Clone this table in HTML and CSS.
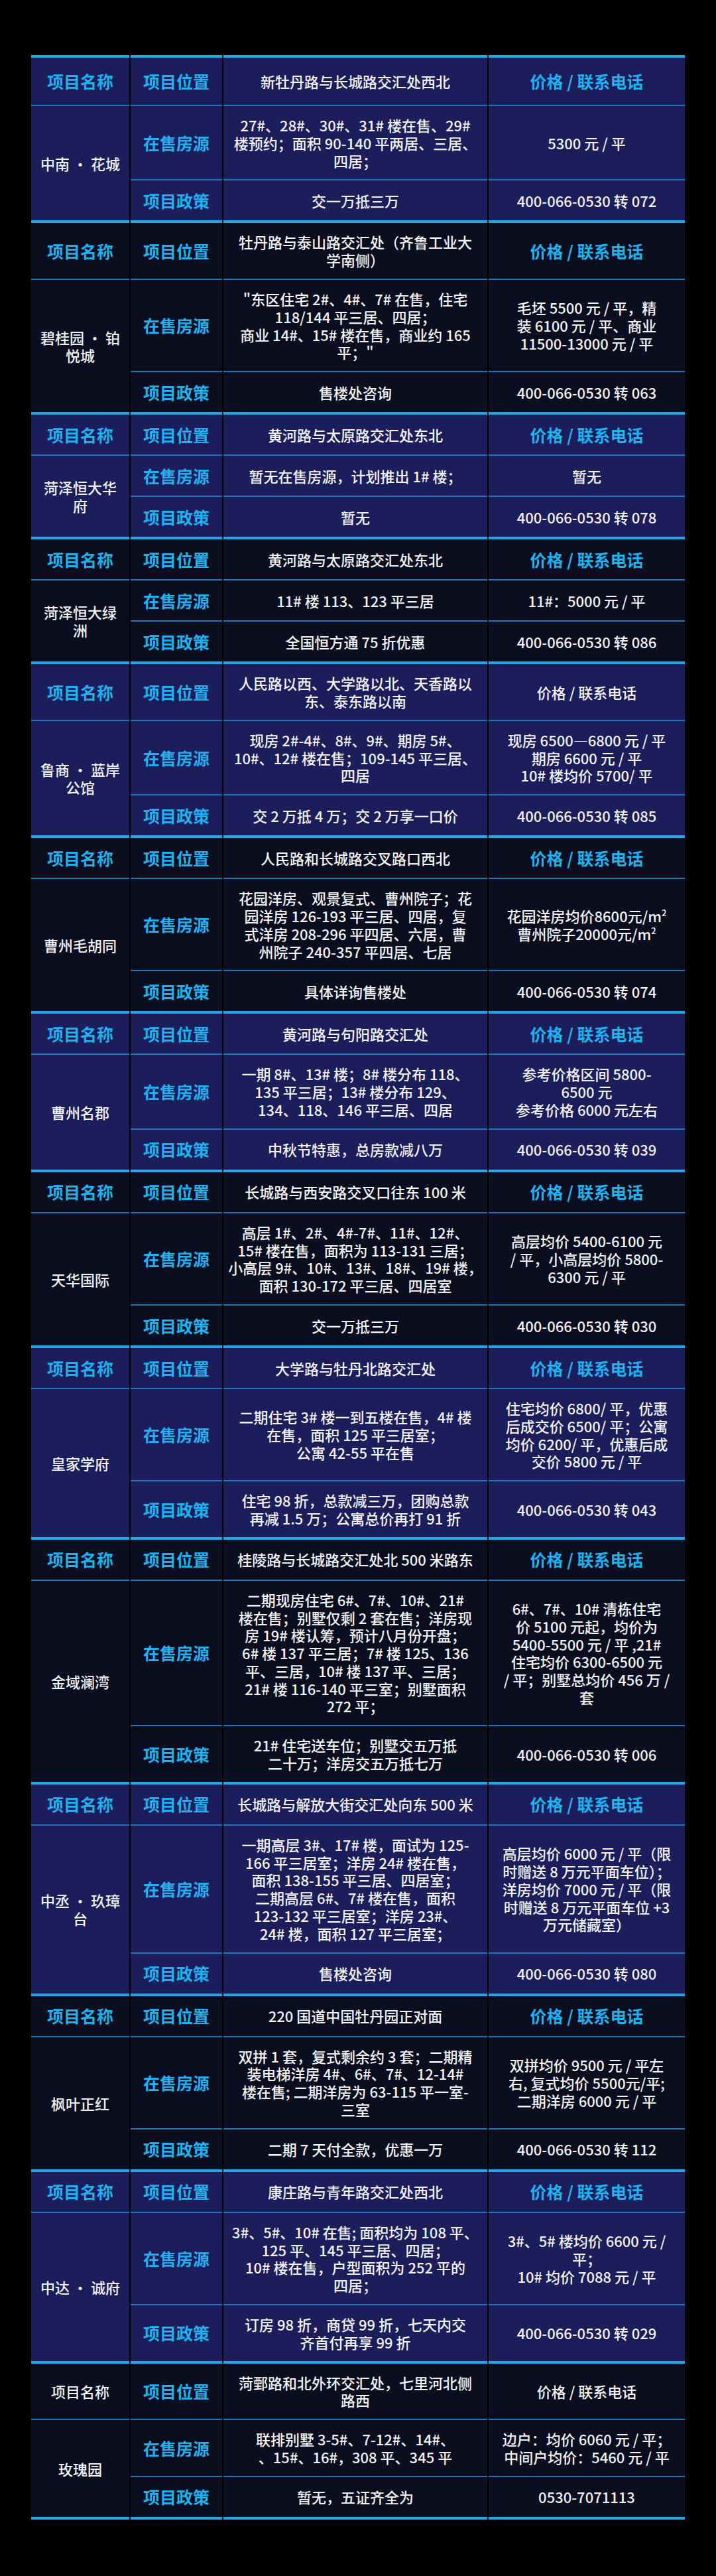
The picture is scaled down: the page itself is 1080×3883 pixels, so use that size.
FILE: index.html
```html
<!DOCTYPE html>
<html lang="zh-CN">
<head>
<meta charset="utf-8">
<title>楼盘信息</title>
<link rel="stylesheet" href="styles.css">
</head>
<body>
<main class="table">

<section class="block navy tall-head">
  <div class="cell head hl">项目名称</div>
  <div class="cell head hl">项目位置</div>
  <div class="cell head">新牡丹路与长城路交汇处西北</div>
  <div class="cell head hl">价格 / 联系电话</div>
  <div class="cell name">中南 · 花城</div>
  <div class="cell hl">在售房源</div>
  <div class="cell">27#、28#、30#、31# 楼在售、29#<br>楼预约；面积 90-140 平两居、三居、<br>四居；</div>
  <div class="cell">5300 元 / 平</div>
  <div class="cell hl">项目政策</div>
  <div class="cell">交一万抵三万</div>
  <div class="cell">400-066-0530 转 072</div>
</section>

<section class="block dark">
  <div class="cell head hl">项目名称</div>
  <div class="cell head hl">项目位置</div>
  <div class="cell head">牡丹路与泰山路交汇处（齐鲁工业大<br>学南侧）</div>
  <div class="cell head hl">价格 / 联系电话</div>
  <div class="cell name">碧桂园 · 铂<br>悦城</div>
  <div class="cell hl">在售房源</div>
  <div class="cell">"东区住宅 2#、4#、7# 在售，住宅<br>118/144 平三居、四居；<br>商业 14#、15# 楼在售，商业约 165<br>平；"</div>
  <div class="cell">毛坯 5500 元 / 平，精<br>装 6100 元 / 平、商业<br>11500-13000 元 / 平</div>
  <div class="cell hl">项目政策</div>
  <div class="cell">售楼处咨询</div>
  <div class="cell">400-066-0530 转 063</div>
</section>

<section class="block navy">
  <div class="cell head hl">项目名称</div>
  <div class="cell head hl">项目位置</div>
  <div class="cell head">黄河路与太原路交汇处东北</div>
  <div class="cell head hl">价格 / 联系电话</div>
  <div class="cell name">菏泽恒大华<br>府</div>
  <div class="cell hl">在售房源</div>
  <div class="cell">暂无在售房源，计划推出 1# 楼；</div>
  <div class="cell">暂无</div>
  <div class="cell hl">项目政策</div>
  <div class="cell">暂无</div>
  <div class="cell">400-066-0530 转 078</div>
</section>

<section class="block dark">
  <div class="cell head hl">项目名称</div>
  <div class="cell head hl">项目位置</div>
  <div class="cell head">黄河路与太原路交汇处东北</div>
  <div class="cell head hl">价格 / 联系电话</div>
  <div class="cell name">菏泽恒大绿<br>洲</div>
  <div class="cell hl">在售房源</div>
  <div class="cell">11# 楼 113、123 平三居</div>
  <div class="cell">11#：5000 元 / 平</div>
  <div class="cell hl">项目政策</div>
  <div class="cell">全国恒方通 75 折优惠</div>
  <div class="cell">400-066-0530 转 086</div>
</section>

<section class="block navy">
  <div class="cell head hl">项目名称</div>
  <div class="cell head hl">项目位置</div>
  <div class="cell head">人民路以西、大学路以北、天香路以<br>东、泰东路以南</div>
  <div class="cell head">价格 / 联系电话</div>
  <div class="cell name">鲁商 · 蓝岸<br>公馆</div>
  <div class="cell hl">在售房源</div>
  <div class="cell">现房 2#-4#、8#、9#、期房 5#、<br>10#、12# 楼在售；109-145 平三居、<br>四居</div>
  <div class="cell">现房 6500—6800 元 / 平<br>期房 6600 元 / 平<br>10# 楼均价 5700/ 平</div>
  <div class="cell hl">项目政策</div>
  <div class="cell">交 2 万抵 4 万；交 2 万享一口价</div>
  <div class="cell">400-066-0530 转 085</div>
</section>

<section class="block dark">
  <div class="cell head hl">项目名称</div>
  <div class="cell head hl">项目位置</div>
  <div class="cell head">人民路和长城路交叉路口西北</div>
  <div class="cell head hl">价格 / 联系电话</div>
  <div class="cell name">曹州毛胡同</div>
  <div class="cell hl">在售房源</div>
  <div class="cell">花园洋房、观景复式、曹州院子；花<br>园洋房 126-193 平三居、四居，复<br>式洋房 208-296 平四居、六居，曹<br>州院子 240-357 平四居、七居</div>
  <div class="cell"><span class="t">花园洋房均价8600元/m<sup>2</sup><br>曹州院子20000元/m<sup>2</sup></span></div>
  <div class="cell hl">项目政策</div>
  <div class="cell">具体详询售楼处</div>
  <div class="cell">400-066-0530 转 074</div>
</section>

<section class="block navy">
  <div class="cell head hl">项目名称</div>
  <div class="cell head hl">项目位置</div>
  <div class="cell head">黄河路与句阳路交汇处</div>
  <div class="cell head hl">价格 / 联系电话</div>
  <div class="cell name">曹州名郡</div>
  <div class="cell hl">在售房源</div>
  <div class="cell">一期 8#、13# 楼；8# 楼分布 118、<br>135 平三居；13# 楼分布 129、<br>134、118、146 平三居、四居</div>
  <div class="cell">参考价格区间 5800-<br>6500 元<br>参考价格 6000 元左右</div>
  <div class="cell hl">项目政策</div>
  <div class="cell">中秋节特惠，总房款减八万</div>
  <div class="cell">400-066-0530 转 039</div>
</section>

<section class="block dark">
  <div class="cell head hl">项目名称</div>
  <div class="cell head hl">项目位置</div>
  <div class="cell head">长城路与西安路交叉口往东 100 米</div>
  <div class="cell head hl">价格 / 联系电话</div>
  <div class="cell name">天华国际</div>
  <div class="cell hl">在售房源</div>
  <div class="cell">高层 1#、2#、4#-7#、11#、12#、<br>15# 楼在售，面积为 113-131 三居；<br>小高层 9#、10#、13#、18#、19# 楼，<br>面积 130-172 平三居、四居室</div>
  <div class="cell">高层均价 5400-6100 元<br>/ 平，小高层均价 5800-<br>6300 元 / 平</div>
  <div class="cell hl">项目政策</div>
  <div class="cell">交一万抵三万</div>
  <div class="cell">400-066-0530 转 030</div>
</section>

<section class="block navy">
  <div class="cell head hl">项目名称</div>
  <div class="cell head hl">项目位置</div>
  <div class="cell head">大学路与牡丹北路交汇处</div>
  <div class="cell head hl">价格 / 联系电话</div>
  <div class="cell name">皇家学府</div>
  <div class="cell hl">在售房源</div>
  <div class="cell">二期住宅 3# 楼一到五楼在售，4# 楼<br>在售，面积 125 平三居室；<br>公寓 42-55 平在售</div>
  <div class="cell">住宅均价 6800/ 平，优惠<br>后成交价 6500/ 平；公寓<br>均价 6200/ 平，优惠后成<br>交价 5800 元 / 平</div>
  <div class="cell hl">项目政策</div>
  <div class="cell">住宅 98 折，总款减三万，团购总款<br>再减 1.5 万；公寓总价再打 91 折</div>
  <div class="cell">400-066-0530 转 043</div>
</section>

<section class="block dark">
  <div class="cell head hl">项目名称</div>
  <div class="cell head hl">项目位置</div>
  <div class="cell head">桂陵路与长城路交汇处北 500 米路东</div>
  <div class="cell head hl">价格 / 联系电话</div>
  <div class="cell name">金域澜湾</div>
  <div class="cell hl">在售房源</div>
  <div class="cell">二期现房住宅 6#、7#、10#、21#<br>楼在售；别墅仅剩 2 套在售；洋房现<br>房 19# 楼认筹，预计八月份开盘；<br>6# 楼 137 平三居；7# 楼 125、136<br>平、三居，10# 楼 137 平、三居；<br>21# 楼 116-140 平三室；别墅面积<br>272 平；</div>
  <div class="cell">6#、7#、10# 清栋住宅<br>价 5100 元起，均价为<br>5400-5500 元 / 平 ,21#<br>住宅均价 6300-6500 元<br>/ 平；别墅总均价 456 万 /<br>套</div>
  <div class="cell hl">项目政策</div>
  <div class="cell">21# 住宅送车位；别墅交五万抵<br>二十万；洋房交五万抵七万</div>
  <div class="cell">400-066-0530 转 006</div>
</section>

<section class="block navy">
  <div class="cell head hl">项目名称</div>
  <div class="cell head hl">项目位置</div>
  <div class="cell head">长城路与解放大街交汇处向东 500 米</div>
  <div class="cell head hl">价格 / 联系电话</div>
  <div class="cell name">中丞 · 玖璋<br>台</div>
  <div class="cell hl">在售房源</div>
  <div class="cell">一期高层 3#、17# 楼，面试为 125-<br>166 平三居室；洋房 24# 楼在售，<br>面积 138-155 平三居、四居室；<br>二期高层 6#、7# 楼在售，面积<br>123-132 平三居室；洋房 23#、<br>24# 楼，面积 127 平三居室；</div>
  <div class="cell">高层均价 6000 元 / 平（限<br>时赠送 8 万元平面车位）；<br>洋房均价 7000 元 / 平（限<br>时赠送 8 万元平面车位 +3<br>万元储藏室）</div>
  <div class="cell hl">项目政策</div>
  <div class="cell">售楼处咨询</div>
  <div class="cell">400-066-0530 转 080</div>
</section>

<section class="block dark">
  <div class="cell head hl">项目名称</div>
  <div class="cell head hl">项目位置</div>
  <div class="cell head">220 国道中国牡丹园正对面</div>
  <div class="cell head hl">价格 / 联系电话</div>
  <div class="cell name">枫叶正红</div>
  <div class="cell hl">在售房源</div>
  <div class="cell">双拼 1 套，复式剩余约 3 套；二期精<br>装电梯洋房 4#、6#、7#、12-14#<br>楼在售; 二期洋房为 63-115 平一室-<br>三室</div>
  <div class="cell">双拼均价 9500 元 / 平左<br>右, 复式均价 5500元/平;<br>二期洋房 6000 元 / 平</div>
  <div class="cell hl">项目政策</div>
  <div class="cell">二期 7 天付全款，优惠一万</div>
  <div class="cell">400-066-0530 转 112</div>
</section>

<section class="block navy">
  <div class="cell head hl">项目名称</div>
  <div class="cell head hl">项目位置</div>
  <div class="cell head">康庄路与青年路交汇处西北</div>
  <div class="cell head hl">价格 / 联系电话</div>
  <div class="cell name">中达 · 诚府</div>
  <div class="cell hl">在售房源</div>
  <div class="cell">3#、5#、10# 在售; 面积均为 108 平、<br>125 平、145 平三居、四居；<br>10# 楼在售，户型面积为 252 平的<br>四居；</div>
  <div class="cell">3#、5# 楼均价 6600 元 /<br>平；<br>10# 均价 7088 元 / 平</div>
  <div class="cell hl">项目政策</div>
  <div class="cell">订房 98 折，商贷 99 折，七天内交<br>齐首付再享 99 折</div>
  <div class="cell">400-066-0530 转 029</div>
</section>

<section class="block dark">
  <div class="cell head">项目名称</div>
  <div class="cell head hl">项目位置</div>
  <div class="cell head">菏鄄路和北外环交汇处，七里河北侧<br>路西</div>
  <div class="cell head">价格 / 联系电话</div>
  <div class="cell name">玫瑰园</div>
  <div class="cell hl">在售房源</div>
  <div class="cell">联排别墅 3-5#、7-12#、14#、<br>、15#、16#，308 平、345 平</div>
  <div class="cell">边户：均价 6060 元 / 平；<br>中间户均价：5460 元 / 平</div>
  <div class="cell hl">项目政策</div>
  <div class="cell">暂无，五证齐全为</div>
  <div class="cell">0530-7071113</div>
</section>

<div class="endbar">
  <span></span><span></span><span></span><span></span>
</div>

</main>
</body>
</html>
```

FILE: styles.css
```css
html, body {
  margin: 0;
  padding: 0;
  background: #000;
}

body {
  width: 1080px;
  font-family: "Noto Sans CJK SC", "Noto Sans", sans-serif;
  color: #f2f3f7;
}

.table {
  width: 986px;
  margin: 0 auto;
  padding: 83px 0;
}

.block {
  display: grid;
  grid-template-columns: 148px 138px 398px 296px;
  column-gap: 2px;
  background: #000;
}

.cell {
  box-sizing: border-box;
  min-height: 62px;
  display: flex;
  align-items: center;
  justify-content: center;
  text-align: center;
  padding: 15px 6px;
  font-size: 22px;
  font-weight: 500;
  line-height: 26.8px;
  white-space: nowrap;
  border-top: 2px solid #1b79b6;
}

.navy .cell {
  background: #1c1e5b;
}

.dark .cell {
  background: #0a0e1f;
}

.cell.head {
  min-height: 64px;
  border-top: 4px solid #1fa8e6;
}

.tall-head .cell.head {
  min-height: 75px;
}

.cell.hl {
  color: #1db3f0;
  font-weight: 700;
  font-size: 25px;
}

.cell.name {
  grid-row: span 2;
}

.cell .t {
  display: block;
}

.cell sup {
  font-size: 13px;
  line-height: 0;
  vertical-align: 9px;
}

.endbar {
  display: grid;
  grid-template-columns: 148px 138px 398px 296px;
  column-gap: 2px;
  height: 4px;
}

.endbar span {
  background: #1fa8e6;
}
```
